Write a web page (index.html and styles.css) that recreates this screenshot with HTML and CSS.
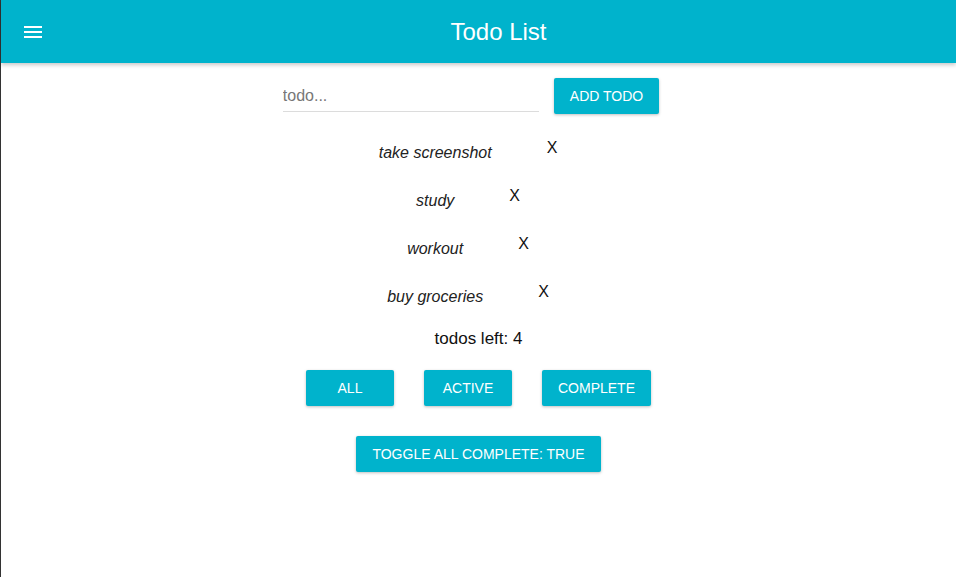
FILE: index.html
```html
<!DOCTYPE html>
<html lang="en">
<head>
<meta charset="utf-8">
<title>Todo List</title>
<link rel="stylesheet" href="styles.css">
</head>
<body>
<div class="app">
  <header class="toolbar">
    <button class="menu-btn" aria-label="menu">
      <svg width="24" height="24" viewBox="0 0 24 24"><path fill="#fff" d="M3 18h18v-2H3v2zm0-5h18v-2H3v2zm0-7v2h18V6H3z"/></svg>
    </button>
    <h1 class="title">Todo List</h1>
  </header>
  <main class="content">
    <form class="add-row">
      <input class="todo-input" type="text" placeholder="todo...">
      <button type="button" class="btn add-btn">Add Todo</button>
    </form>
    <ul class="todo-list">
      <li class="todo"><span class="todo-text">take screenshot</span><span class="todo-x">X</span></li>
      <li class="todo"><span class="todo-text">study</span><span class="todo-x">X</span></li>
      <li class="todo"><span class="todo-text">workout</span><span class="todo-x">X</span></li>
      <li class="todo"><span class="todo-text">buy groceries</span><span class="todo-x">X</span></li>
    </ul>
    <div class="counter">todos left: 4</div>
    <div class="filters">
      <button class="btn">All</button>
      <button class="btn">Active</button>
      <button class="btn">Complete</button>
    </div>
    <div class="toggle-row">
      <button class="btn">Toggle all complete: true</button>
    </div>
  </main>
</div>
</body>
</html>
```

FILE: styles.css
```css
html, body {
  margin: 0;
  padding: 0;
  height: 100%;
  background: #fff;
}
body {
  font-family: "Liberation Sans", Arial, sans-serif;
  color: #111;
}
.app {
  min-height: 100%;
  border-left: 1px solid #333;
  box-sizing: border-box;
}
.toolbar {
  height: 63px;
  background: #00b3cc;
  display: flex;
  align-items: center;
  padding: 0 4px 0 20px;
  box-shadow: 0 2px 4px rgba(0, 0, 0, 0.22);
  position: relative;
}
.menu-btn {
  background: none;
  border: none;
  padding: 0;
  width: 24px;
  height: 24px;
  display: flex;
  cursor: pointer;
}
.title {
  flex: 1;
  margin: 0;
  text-align: center;
  color: #fff;
  font-size: 24px;
  font-weight: normal;
  line-height: 28px;
}
.content {
  display: flex;
  flex-direction: column;
  align-items: center;
}
.add-row {
  margin: 15px 0 0;
  display: flex;
  align-items: flex-start;
  gap: 15px;
}
.todo-input {
  width: 256px;
  height: 34px;
  box-sizing: border-box;
  border: none;
  border-bottom: 1px solid #dcdcdc;
  padding: 2px 0 0;
  font-family: inherit;
  font-size: 16px;
  color: #333;
  outline: none;
  background: transparent;
}
.todo-input::placeholder {
  color: #777;
}
.add-btn {
  margin-right: 15px;
}
.btn {
  height: 36px;
  min-width: 88px;
  padding: 0 16px;
  box-sizing: border-box;
  border: none;
  border-radius: 2px;
  background: #00b3cc;
  color: #fff;
  font-family: inherit;
  font-size: 14px;
  line-height: 36px;
  text-transform: uppercase;
  box-shadow: 0 1px 3px rgba(0, 0, 0, 0.25);
  cursor: pointer;
}
.todo-list {
  list-style: none;
  margin: 17px 0 0;
  padding: 0;
}
.todo {
  display: flex;
  justify-content: center;
  align-items: flex-start;
  height: 48px;
  box-sizing: border-box;
  padding-top: 12px;
  font-size: 16px;
  line-height: 20px;
}
.todo-text {
  font-style: italic;
  color: #222;
}
.todo-x {
  margin: -5px 21px 0 55px;
  color: #111;
}
.counter {
  margin-top: 6px;
  font-size: 17px;
  line-height: 20px;
  color: #111;
}
.filters {
  margin-top: 21px;
  display: flex;
  gap: 30px;
}
.toggle-row {
  margin-top: 30px;
}
```
